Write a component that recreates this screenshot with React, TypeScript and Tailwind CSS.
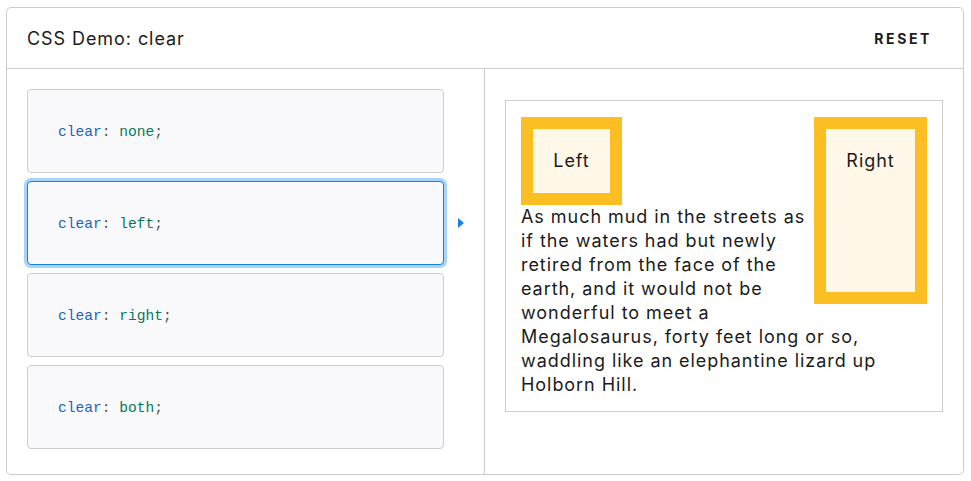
import React from "react";

const options = ["none", "left", "right", "both"];

function Card({ value, selected }: { value: string; selected: boolean }) {
  return (
    <div className="flex items-center">
      <div
        className={
          selected
            ? "w-[417px] h-[84px] flex items-center pl-[30px] pt-[2px] rounded-[4px] bg-[#f9f9fb] border border-[#1a7fe0] ring-[3px] ring-[#a6d4fa]"
            : "w-[417px] h-[84px] flex items-center pl-[30px] pt-[2px] rounded-[4px] bg-[#f9f9fb] border border-[#cdcdcd]"
        }
      >
        <code className="text-[14.6px] leading-none font-['Liberation_Mono',monospace]">
          <span className="text-[#1c65c2]">clear</span>
          <span className="text-[#555]">: </span>
          <span className="text-[#077a5a]">{value}</span>
          <span className="text-[#555]">;</span>
        </code>
      </div>
      {selected && (
        <div className="ml-[14px] w-0 h-0 border-y-[5px] border-y-transparent border-l-[6px] border-l-[#1a7fe0]" />
      )}
    </div>
  );
}

export default function App() {
  return (
    <div className="w-[971px] h-[481px] bg-white pt-[7px] pl-[6px] font-['Inter','Noto_Sans',sans-serif]">
      <div className="w-[958px] h-[468px] border border-[#cdcdcd] rounded-[5px] flex flex-col">
        <div className="h-[61px] border-b border-[#cdcdcd] flex items-center justify-between pl-[20px] pr-[31px]">
          <span className="text-[18px] tracking-[0.93px] text-[#1b1b1b]">CSS Demo: clear</span>
          <span className="text-[14px] font-bold tracking-[2.6px] text-[#1b1b1b]">RESET</span>
        </div>
        <div className="flex flex-1">
          <div className="w-[478px] border-r border-[#cdcdcd] pl-[20px] pt-[20px] flex flex-col gap-[8px]">
            {options.map((o) => (
              <Card key={o} value={o} selected={o === "left"} />
            ))}
          </div>
          <div className="flex-1 px-[20px] pt-[31px]">
            <div className="w-[438px] h-[312px] border border-[#cdcdcd] px-[15px] pt-[16px] text-[18px] leading-[24px] tracking-[0.95px] text-[#1b1b1b]">
              <div className="float-left w-[101px] h-[88px] border-[12px] border-[#fbbf24] bg-[#fff8e9] flex justify-center pt-[20px] mr-[10px]">
                Left
              </div>
              <div className="float-right w-[113px] h-[187px] border-[12px] border-[#fbbf24] bg-[#fff8e9] flex justify-center pt-[20px]">
                Right
              </div>
              <p className="clear-left">
                As much mud in the streets as if the waters had but newly retired from the face of the earth, and it would not be wonderful to meet a Megalosaurus, forty feet long or so, waddling like an elephantine lizard up Holborn Hill.
              </p>
            </div>
          </div>
        </div>
      </div>
    </div>
  );
}
